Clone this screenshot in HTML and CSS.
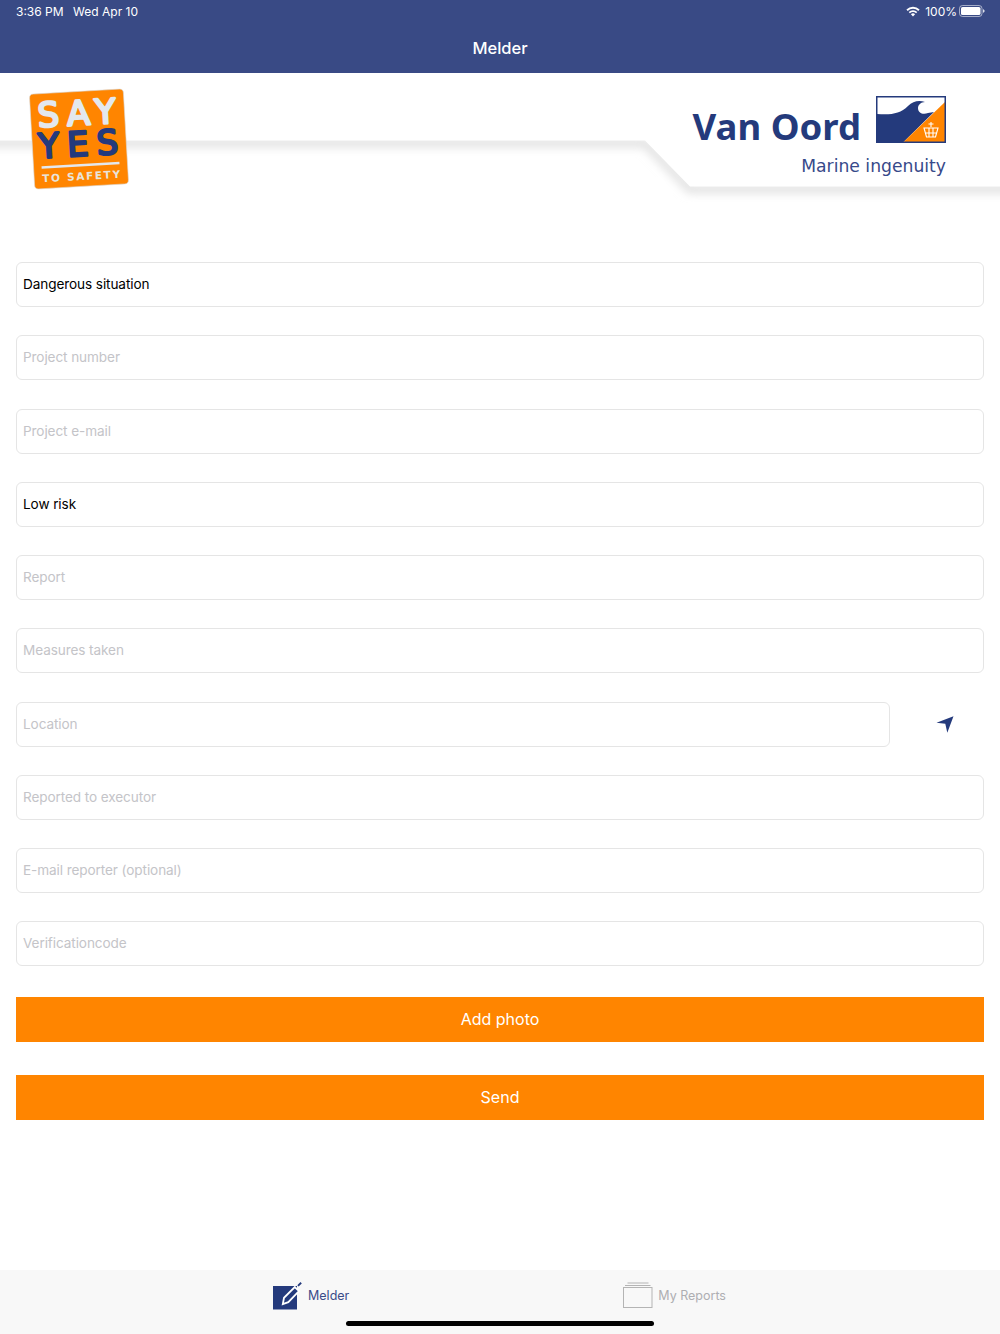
FILE: index.html
```html
<!DOCTYPE html>
<html lang="en">
<head>
<meta charset="utf-8">
<title>Melder</title>
<link rel="stylesheet" href="styles.css">
</head>
<body>
<div class="app">
  <header class="top">
    <div class="status">
      <div class="status-left"><span>3:36 PM</span><span>Wed Apr 10</span></div>
      <div class="status-right">
        <svg class="wifi" viewBox="0 0 14 11"><path d="M7 10.600 4.900 8.300a3 3 0 0 1 4.200 0z"/><path d="M3.900 7.200 2.700 5.900a6.200 6.200 0 0 1 8.600 0l-1.200 1.300a4.400 4.400 0 0 0-6.200 0z"/><path d="M1.700 4.900.4 3.500a9.600 9.600 0 0 1 13.200 0l-1.300 1.400a7.800 7.800 0 0 0-10.600 0z"/></svg>
        <span>100%</span>
        <svg class="battery" viewBox="0 0 26 12"><rect x=".5" y=".5" width="22.500" height="11" rx="3" class="batt-outline"/><rect x="2" y="2" width="19.500" height="8" rx="1.600" class="batt-fill"/><path d="M24.200 4.200c.9.3 1.300 1 1.300 1.800s-.4 1.500-1.300 1.800z" class="batt-fill"/></svg>
      </div>
    </div>
    <h1 class="title">Melder</h1>
  </header>

  <div class="banner">
    <svg class="banner-bg" viewBox="0 0 1000 130">
      <defs>
        <filter id="soft" x="-5%" y="-50%" width="110%" height="200%"><feGaussianBlur stdDeviation="5"/></filter>
      </defs>
      <path d="M-20 70H645L690 116H1020" class="banner-shadow" filter="url(#soft)"/>
      <path d="M0 0H1000V113.500H690L645 67.500H0z" class="banner-white"/>
    </svg>

    <svg class="say-yes" viewBox="0 0 106 108">
      <g transform="rotate(-3.300 53 54)">
        <rect x="6" y="6.500" width="94" height="95" rx="4" class="sy-bg"/>
        <text x="52" y="40" text-anchor="middle" textLength="78" class="sy-big sy-light">SAY</text>
        <text x="52" y="71" text-anchor="middle" textLength="80" class="sy-big sy-navy">YES</text>
        <rect x="14" y="79" width="78" height="2.500" class="sy-rule"/>
        <text x="53" y="95" text-anchor="middle" textLength="78" class="sy-small">TO SAFETY</text>
      </g>
    </svg>

    <div class="van-oord">
      <div class="vo-row">
        <span class="vo-name">Van Oord</span>
        <svg class="vo-flag" viewBox="0 0 70 47">
          <rect x=".5" y=".5" width="69" height="46" class="flag-white"/>
          <path d="M1 18C15 19 24 18 32 10 37 5 43 4 49 6 45 6 42 9 42 12 42 17 47 19 52 17L58 16 27 46.500H1z" class="flag-navy"/>
          <path d="M69.500 5.500V46.500H27z" class="flag-orange"/>
          <path d="M55 26v5M52.500 28h5M48 32h14l-2.500 9h-9zM53 32v9M57 32v9M49 37h12" class="flag-crown"/>
          <rect x=".75" y=".75" width="68.500" height="45.500" class="flag-border"/>
        </svg>
      </div>
      <div class="vo-tag">Marine ingenuity</div>
    </div>
  </div>

  <main class="form">
    <input class="field" type="text" value="Dangerous situation" aria-label="Type">
    <input class="field" type="text" placeholder="Project number">
    <input class="field" type="text" placeholder="Project e-mail">
    <input class="field" type="text" value="Low risk" aria-label="Risk">
    <input class="field" type="text" placeholder="Report">
    <input class="field" type="text" placeholder="Measures taken">
    <div class="location-row">
      <input class="field field-location" type="text" placeholder="Location">
      <svg class="locate" viewBox="0 0 18 17"><path d="M17.500 .3 11.300 16.700 9.300 7.800 .5 6.800z"/></svg>
    </div>
    <input class="field" type="text" placeholder="Reported to executor">
    <input class="field" type="text" placeholder="E-mail reporter (optional)">
    <input class="field" type="text" placeholder="Verificationcode">
    <button class="action action-first" type="button">Add photo</button>
    <button class="action action-second" type="button">Send</button>
  </main>

  <nav class="tabs">
    <a class="tab tab-active">
      <svg class="tab-icon-melder" viewBox="0 0 29 29"><rect x="0" y="5" width="24" height="23.500" class="melder-box"/><path d="M9.800 23.200 11 16.800 21.800 6 26 10 15.300 21.200z" class="melder-pen"/><path d="M24.300 4.300 27.500 1.100 28.800 2.400 25.600 5.600z" class="melder-tip"/></svg>
      <span>Melder</span>
    </a>
    <a class="tab">
      <svg class="tab-icon-reports" viewBox="0 0 30 26"><rect x=".5" y="5.500" width="28.500" height="20" /><path d="M2 3.500H27.500M4.500 1H25.500"/></svg>
      <span>My Reports</span>
    </a>
    <div class="home-bar"></div>
  </nav>
</div>
</body>
</html>
```

FILE: styles.css
```css
* { box-sizing: border-box; }
html, body { margin: 0; padding: 0; background: #fff; }
body { font-family: Inter, "Liberation Sans", sans-serif; }

.app { width: 1000px; height: 1334px; display: flex; flex-direction: column; overflow: hidden; }

.top { height: 73px; background: #394a85; color: #fff; flex: none; }
.status { height: 22px; padding: 0 15px 0 16px; display: flex; justify-content: space-between; align-items: center; font-size: 12px; }
.status-left { display: flex; gap: 9.500px; }
.status-right { display: flex; align-items: center; gap: 2px; }
.wifi { width: 14px; height: 11px; margin-right: 3px; fill: #fff; }
.battery { width: 26px; height: 12px; }
.batt-outline { fill: none; stroke: #fff; stroke-opacity: .55; }
.batt-fill { fill: #fff; }
.title { margin: 0; padding-top: 8px; font-size: 16.500px; line-height: 36px; font-weight: 500; text-align: center; }

.banner { position: relative; height: 117px; flex: none; }
.banner-bg { position: absolute; left: 0; top: 0; width: 1000px; height: 130px; }
.banner-shadow { fill: none; stroke: #dedede; stroke-width: 8; }
.banner-white { fill: #fff; }

.say-yes { position: absolute; left: 26px; top: 12px; width: 106px; height: 108px; }
.sy-bg { fill: #ff8500; stroke: #d9d9d9; stroke-width: .6; }
.sy-big { font-family: "DejaVu Sans", sans-serif; font-size: 34px; stroke-width: 2.400; stroke-linejoin: round; stroke-linecap: round; }
.sy-light { fill: #e3e8ee; stroke: #e3e8ee; }
.sy-navy { fill: #243a7c; stroke: #243a7c; }
.sy-rule { fill: #e3e8ee; }
.sy-small { font-family: "DejaVu Sans", sans-serif; font-weight: 700; font-size: 10.500px; fill: #e8e4dc; }

.van-oord { position: absolute; right: 54px; top: 23px; display: flex; flex-direction: column; align-items: flex-end; }
.vo-row { display: flex; align-items: flex-end; gap: 15px; }
.vo-name { font-family: "Noto Sans", sans-serif; font-weight: 700; font-size: 36.500px; line-height: 44px; color: #243a7c; margin-bottom: -5px; }
.vo-flag { width: 70px; height: 47px; display: block; }
.flag-white { fill: #fff; }
.flag-navy { fill: #243a7c; }
.flag-orange { fill: #ff8500; }
.flag-crown { fill: none; stroke: #fff; stroke-width: 1.100; }
.flag-border { fill: none; stroke: #243a7c; stroke-width: 1.500; }
.vo-tag { font-family: "DejaVu Sans", sans-serif; font-size: 17.200px; line-height: 22px; color: #37498a; margin-top: 12px; }

.form { flex: 1; padding: 72px 16px 0; display: flex; flex-direction: column; gap: 28.250px; }
.field { width: 100%; height: 45px; flex: none; display: block; border: 1px solid #e5e5e5; border-radius: 6px; padding: 0 6px 1px; background: #fff; font-family: inherit; font-size: 13.600px; letter-spacing: -.1px; color: #000; outline: none; }
.field::placeholder { color: #c4c4c8; opacity: 1; }
.location-row { display: flex; align-items: center; flex: none; }
.field-location { width: 874px; }
.locate { width: 18px; height: 17px; margin-left: 46px; fill: #243a7c; }

.action { display: block; width: 100%; height: 45px; flex: none; border: 0; padding: 0 0 1px; background: #ff8500; color: #fff; font-family: inherit; font-size: 16px; }
.action-first { margin-top: 2.500px; }
.action-second { margin-top: 4.750px; }

.tabs { position: relative; height: 64px; flex: none; background: #f8f8f8; display: flex; justify-content: center; gap: 274px; padding: 11px 1px 0 0; font-size: 12.500px; }
.tab { display: flex; align-items: flex-start; gap: 5px; color: #aeaeb2; }
.tab span { line-height: 30px; }
.tab-active { color: #3a4c88; gap: 6px; }
.tab-icon-melder { width: 29px; height: 29px; }
.melder-box { fill: #243a7c; }
.melder-pen { fill: #243a7c; stroke: #fff; stroke-width: 1.800; }
.melder-tip { fill: #243a7c; }
.tab-icon-reports { width: 30px; height: 26px; margin-top: 1px; fill: none; stroke: #b4b4b4; stroke-width: 1; }
.home-bar { position: absolute; left: 346px; top: 51px; width: 308px; height: 5px; border-radius: 3px; background: #000; }
```
